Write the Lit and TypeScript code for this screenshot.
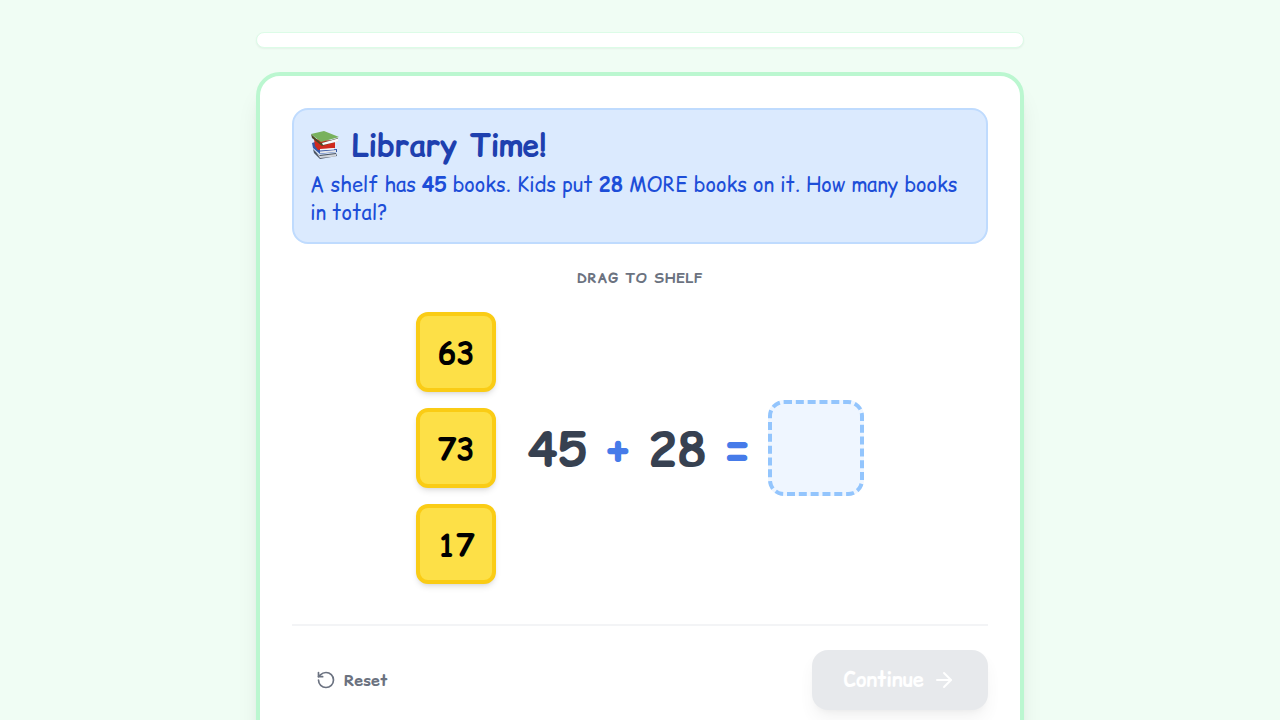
import { LitElement, html, css } from "lit";
import { customElement, state } from "lit/decorators.js";

@customElement("app-root")
class AppRoot extends LitElement {
  static styles = css`
    :host {
      display: block;
      min-height: 100vh;
      box-sizing: border-box;
      padding: 32px 16px;
      background: #f0fdf4;
      color: #000;
      font-family: "Comic Relief", "Comic Neue", cursive;
      font-size: 16px;
      line-height: 24px;
    }
    *, *::before, *::after { box-sizing: border-box; }
    h1, p { margin: 0; }
    button { font: inherit; border: 0; margin: 0; }
    .page {
      max-width: 768px;
      margin: 0 auto;
      display: flex;
      flex-direction: column;
      gap: 24px;
    }
    .progress {
      height: 16px;
      border: 1px solid #dcfce7;
      border-radius: 8px;
      background: #fff;
      box-shadow: 0 1px 2px rgba(0, 0, 0, 0.05);
    }
    .card {
      border: 4px solid #bbf7d0;
      border-radius: 24px;
      background: #fff;
      padding: 32px;
      box-shadow: 0 20px 25px -5px rgba(0, 0, 0, 0.1), 0 8px 10px -6px rgba(0, 0, 0, 0.1);
    }
    .story {
      border: 2px solid #bfdbfe;
      border-radius: 16px;
      background: #dbeafe;
      padding: 17px 16px 15px;
      display: flex;
      flex-direction: column;
      gap: 8px;
    }
    .title {
      display: flex;
      align-items: center;
      gap: 12px;
      font-size: 30px;
      line-height: 36px;
      font-weight: 700;
      color: #1e40af;
    }
    .books { width: 30px; height: 30px; flex: none; }
    .text { font-size: 20px; line-height: 28px; color: #1d4ed8; }
    .hint {
      margin: 24px 0;
      text-align: center;
      font-size: 14px;
      line-height: 20px;
      font-weight: 700;
      letter-spacing: 0.05em;
      text-transform: uppercase;
      color: #6b7280;
    }
    .work {
      display: flex;
      justify-content: center;
      align-items: center;
      gap: 32px;
    }
    .tiles { display: flex; flex-direction: column; gap: 16px; }
    .tile {
      width: 80px;
      height: 80px;
      padding: 2px 0 0;
      border: 4px solid #facc15;
      border-radius: 12px;
      background: #fde047;
      color: #000;
      font-size: 30px;
      line-height: 36px;
      font-weight: 700;
      cursor: grab;
      box-shadow: 0 4px 6px -1px rgba(0, 0, 0, 0.1), 0 2px 4px -2px rgba(0, 0, 0, 0.1);
    }
    .equation {
      display: flex;
      align-items: center;
      gap: 16px;
      font-size: 48px;
      line-height: 48px;
      font-weight: 700;
      color: #374151;
    }
    .term { padding-top: 2px; }
    .op { color: #467be9; }
    .slot {
      width: 96px;
      height: 96px;
      border: 4px dashed #93c5fd;
      border-radius: 16px;
      background: #eff6ff;
    }
    .footer {
      margin-top: 40px;
      padding-top: 24px;
      border-top: 2px solid #f3f4f6;
      display: flex;
      justify-content: space-between;
      align-items: center;
    }
    .reset, .next { display: flex; align-items: center; gap: 8px; font-weight: 700; }
    .reset {
      padding: 12px 24px;
      border-radius: 12px;
      background: transparent;
      color: #6b7280;
    }
    .next {
      padding: 16px 32px;
      border-radius: 16px;
      background: #d1d5db;
      color: #fff;
      font-size: 20px;
      line-height: 28px;
      opacity: 0.5;
      box-shadow: 0 10px 15px -3px rgba(0, 0, 0, 0.1), 0 4px 6px -4px rgba(0, 0, 0, 0.1);
    }
    .icon {
      fill: none;
      stroke: currentColor;
      stroke-width: 2;
      stroke-linecap: round;
      stroke-linejoin: round;
    }
  `;

  @state() private answer: number | null = null;

  private options = [63, 73, 17];

  render() {
    return html`
      <main class="page">
        <div class="progress"></div>
        <section class="card">
          <div class="story">
            <h1 class="title">
              <svg class="books" viewBox="0 0 30 30" aria-hidden="true">
                <path d="M3 19 L9 25 L26 23 L27 26 L10 29 L4 23Z" fill="#4b5563" />
                <path d="M6 22 L10 26 L26 24 L26 26.500 L10 28Z" fill="#d1d5db" />
                <path d="M2 13 L5 12 L11 20 L27 19 L27 22 L10 24 L3 18Z" fill="#3558a8" />
                <path d="M10 21.500 L26 20 L26 22 L10 23.500Z" fill="#e5e7eb" />
                <path d="M4 9 L25 11 L25 18 L8 20 L5 16Z" fill="#cf2a1e" />
                <path d="M10 19 L24 18 L24 19.500 L10 20.500Z" fill="#f3f4f6" />
                <path d="M1 4 L11 13 L28 8 L28 11 L12 16 L2 8Z" fill="#4d4a24" />
                <path d="M12 13 L28 8.500 L28 11.500 L13 15Z" fill="#f8fafc" />
                <path d="M1 4 L14 1 L29 7 L11 12Z" fill="#78b15d" />
              </svg>
              Library Time!
            </h1>
            <p class="text">
              A shelf has <strong>45</strong> books. Kids put <strong>28</strong> MORE books on it. How many books in total?
            </p>
          </div>
          <p class="hint">Drag to shelf</p>
          <div class="work">
            <div class="tiles">
              ${this.options.map(
                (n) => html`<button class="tile" draggable="true" @click=${() => (this.answer = n)}>${n}</button>`
              )}
            </div>
            <div class="equation">
              <span class="term">45</span><span class="term op">+</span><span class="term">28</span><span class="term op">=</span>
              <div class="slot"></div>
            </div>
          </div>
          <div class="footer">
            <button class="reset" @click=${() => (this.answer = null)}>
              <svg class="icon" width="20" height="20" viewBox="0 0 24 24" aria-hidden="true">
                <path d="M3 12a9 9 0 1 0 9-9 9.750 9.750 0 0 0-6.740 2.740L3 8" />
                <path d="M3 3v5h5" />
              </svg>
              Reset
            </button>
            <button class="next" disabled>
              Continue
              <svg class="icon" width="24" height="24" viewBox="0 0 24 24" aria-hidden="true">
                <path d="M5 12h14" />
                <path d="m12 5 7 7-7 7" />
              </svg>
            </button>
          </div>
        </section>
      </main>
    `;
  }
}
